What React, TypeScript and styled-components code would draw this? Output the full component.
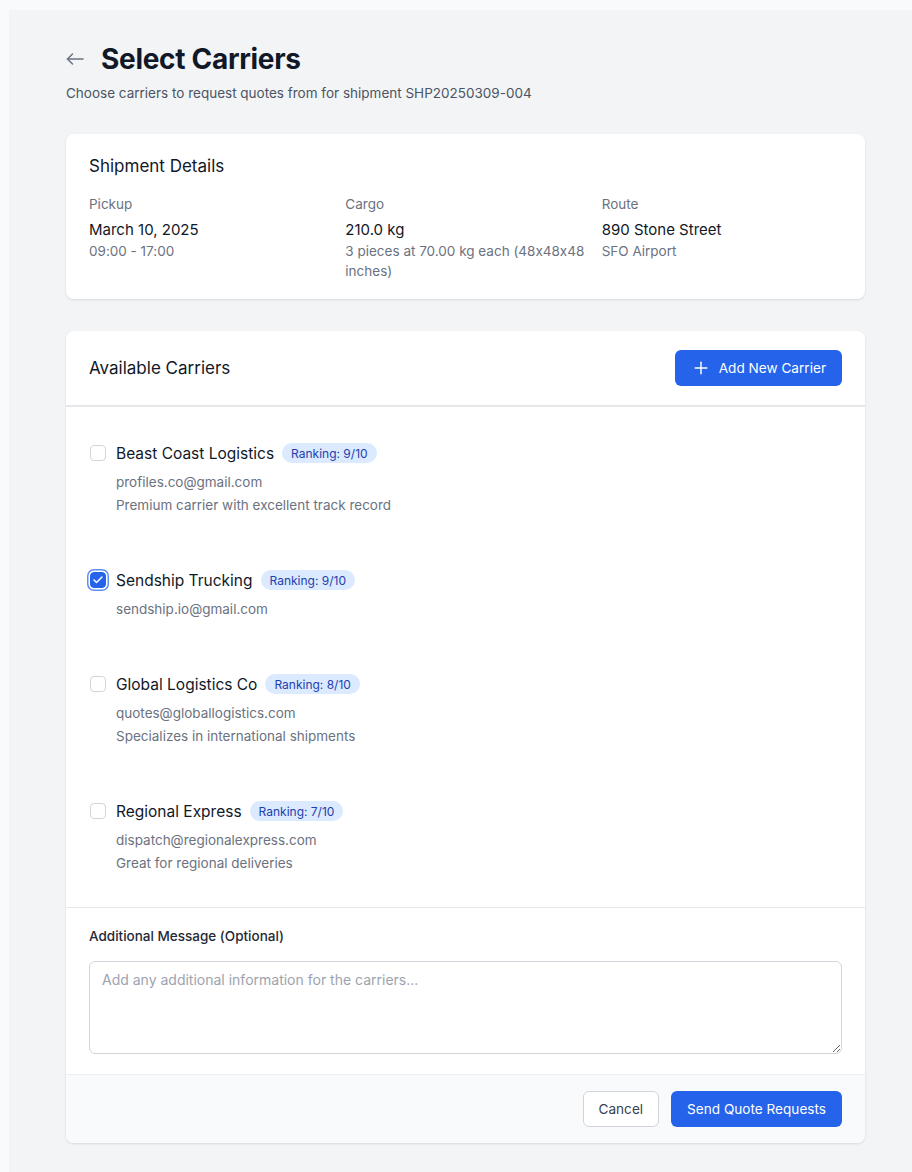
import React, { useState } from 'react';
import styled, { createGlobalStyle } from 'styled-components';
import { Plus, Check } from 'lucide-react';

const GlobalStyle = createGlobalStyle`
  body {
    margin: 0;
    background: #f9fafb;
    font-family: Inter, "Noto Sans", sans-serif;
    font-feature-settings: "calt" 0;
    color: #111827;
    -webkit-font-smoothing: antialiased;
  }
  * { box-sizing: border-box; }
`;

const Page = styled.div`
  margin: 10px 0 0 9px;
  min-height: 1162px;
  background: #f3f4f6;
  padding: 32px 47px 30px 57px;
`;

const Header = styled.div`
  margin-bottom: 31px;
`;

const TitleRow = styled.div`
  display: flex;
  align-items: center;
  gap: 17px;
`;

const BackButton = styled.button`
  border: none;
  background: none;
  padding: 0;
  display: flex;
  align-items: center;
  color: #6b7280;
  cursor: pointer;
`;

const Title = styled.h1`
  margin: 0;
  font-size: 28px;
  line-height: 34px;
  font-weight: 700;
  letter-spacing: -0.3px;
  color: #111827;
`;

const Subtitle = styled.p`
  margin: 7px 0 0;
  font-size: 13.5px;
  line-height: 20px;
  color: #4b5563;
`;

const Card = styled.section`
  background: #ffffff;
  border-radius: 8px;
  box-shadow: 0 1px 3px rgba(0, 0, 0, 0.08), 0 1px 2px rgba(0, 0, 0, 0.04);
  margin-bottom: 32px;
  overflow: hidden;
`;

const CardBody = styled.div`
  padding: 20px 23px 18px;
`;

const CardTitle = styled.h2`
  margin: 0;
  font-size: 17px;
  line-height: 24px;
  font-weight: 400;
  color: #111827;
`;

const DetailGrid = styled.div`
  display: grid;
  grid-template-columns: repeat(3, 1fr);
  gap: 16px;
  margin-top: 16px;
`;

const DetailLabel = styled.div`
  font-size: 13.5px;
  line-height: 20px;
  color: #6b7280;
`;

const DetailValue = styled.div`
  margin-top: 5px;
  font-size: 15px;
  line-height: 22px;
  color: #111827;
`;

const DetailSub = styled.div`
  font-size: 13.5px;
  line-height: 20px;
  color: #6b7280;
`;

const CardHeader = styled.div`
  display: flex;
  align-items: center;
  justify-content: space-between;
  padding: 19px 23px 19px;
  border-bottom: 2px solid #e5e7eb;
`;

const PrimaryButton = styled.button`
  display: inline-flex;
  align-items: center;
  gap: 8px;
  height: 36px;
  padding: 0 16px;
  border: none;
  border-radius: 6px;
  background: #2563eb;
  color: #ffffff;
  font-family: inherit;
  font-size: 13.6px;
  font-weight: 400;
  cursor: pointer;
`;

const SecondaryButton = styled.button`
  height: 36px;
  padding: 0 15px;
  border: 1px solid #d1d5db;
  border-radius: 6px;
  background: #ffffff;
  color: #374151;
  font-family: inherit;
  font-size: 13.6px;
  font-weight: 400;
  cursor: pointer;
`;

const CarrierList = styled.div`
  display: flex;
  flex-direction: column;
  gap: 53px;
  padding: 34px 24px 34px;
  border-bottom: 1px solid #e5e7eb;
`;

const CarrierItem = styled.label`
  display: flex;
  align-items: flex-start;
  gap: 10px;
  cursor: pointer;
`;

const Box = styled.span<{ $checked: boolean }>`
  flex: none;
  width: 16px;
  height: 16px;
  margin-top: 4px;
  border-radius: 4px;
  display: flex;
  align-items: center;
  justify-content: center;
  border: 1px solid ${(p) => (p.$checked ? '#2563eb' : '#d1d5db')};
  background: ${(p) => (p.$checked ? '#2563eb' : '#ffffff')};
  box-shadow: ${(p) => (p.$checked ? '0 0 0 1.5px #ffffff, 0 0 0 3px #5b8ff5' : 'none')};
  color: #ffffff;
`;

const CarrierInfo = styled.div`
  display: flex;
  flex-direction: column;
`;

const NameRow = styled.div`
  display: flex;
  align-items: center;
  gap: 8px;
  height: 24px;
`;

const CarrierName = styled.span`
  font-size: 15.5px;
  font-weight: 400;
  color: #111827;
`;

const Badge = styled.span`
  display: inline-flex;
  align-items: center;
  height: 20px;
  padding: 0 9px;
  border-radius: 999px;
  background: #dbeafe;
  color: #1e40af;
  font-size: 12px;
  font-weight: 400;
`;

const CarrierMeta = styled.div<{ $first?: boolean }>`
  margin-top: ${(p) => (p.$first ? '7px' : '3px')};
  font-size: 13.5px;
  line-height: 20px;
  color: #6b7280;
`;

const MessageSection = styled.div`
  padding: 18px 23px 20px;
`;

const FieldLabel = styled.label`
  display: block;
  font-size: 13.5px;
  line-height: 20px;
  font-weight: 500;
  color: #1f2937;
  margin-bottom: 15px;
`;

const TextArea = styled.textarea`
  display: block;
  width: 100%;
  height: 93px;
  padding: 8px 12px;
  border: 1px solid #d1d5db;
  border-radius: 6px;
  font-family: inherit;
  font-size: 14px;
  line-height: 20px;
  color: #111827;
  resize: vertical;
  &::placeholder {
    color: #9ca3af;
  }
`;

const Footer = styled.div`
  display: flex;
  justify-content: flex-end;
  gap: 12px;
  padding: 16px 23px;
  background: #f9fafb;
  border-top: 1px solid #eceef1;
`;

const BackArrow = () => (
  <svg width="18" height="12" viewBox="0 0 18 12" fill="none" stroke="currentColor" strokeWidth="1.5" strokeLinecap="round" strokeLinejoin="round">
    <path d="M17 6H1.5" />
    <path d="M6.5 1L1.5 6l5 5" />
  </svg>
);

interface Carrier {
  id: number;
  name: string;
  ranking: string;
  email: string;
  note?: string;
}

const carriers: Carrier[] = [
  { id: 1, name: 'Beast Coast Logistics', ranking: '9/10', email: 'profiles.co@gmail.com', note: 'Premium carrier with excellent track record' },
  { id: 2, name: 'Sendship Trucking', ranking: '9/10', email: 'sendship.io@gmail.com' },
  { id: 3, name: 'Global Logistics Co', ranking: '8/10', email: 'quotes@globallogistics.com', note: 'Specializes in international shipments' },
  { id: 4, name: 'Regional Express', ranking: '7/10', email: 'dispatch@regionalexpress.com', note: 'Great for regional deliveries' },
];

const App: React.FC = () => {
  const [selected, setSelected] = useState<number[]>([2]);
  const [message, setMessage] = useState('');

  const toggle = (id: number) => {
    setSelected((prev) => (prev.includes(id) ? prev.filter((x) => x !== id) : [...prev, id]));
  };

  return (
    <>
      <GlobalStyle />
      <Page>
        <Header>
          <TitleRow>
            <BackButton aria-label="Back">
              <BackArrow />
            </BackButton>
            <Title>Select Carriers</Title>
          </TitleRow>
          <Subtitle>Choose carriers to request quotes from for shipment SHP20250309-004</Subtitle>
        </Header>

        <Card>
          <CardBody>
            <CardTitle>Shipment Details</CardTitle>
            <DetailGrid>
              <div>
                <DetailLabel>Pickup</DetailLabel>
                <DetailValue>March 10, 2025</DetailValue>
                <DetailSub>09:00 - 17:00</DetailSub>
              </div>
              <div>
                <DetailLabel>Cargo</DetailLabel>
                <DetailValue>210.0 kg</DetailValue>
                <DetailSub>3 pieces at 70.00 kg each (48x48x48 inches)</DetailSub>
              </div>
              <div>
                <DetailLabel>Route</DetailLabel>
                <DetailValue>890 Stone Street</DetailValue>
                <DetailSub>SFO Airport</DetailSub>
              </div>
            </DetailGrid>
          </CardBody>
        </Card>

        <Card>
          <CardHeader>
            <CardTitle>Available Carriers</CardTitle>
            <PrimaryButton>
              <Plus size={20} strokeWidth={1.75} />
              Add New Carrier
            </PrimaryButton>
          </CardHeader>
          <CarrierList>
            {carriers.map((c) => {
              const checked = selected.includes(c.id);
              return (
                <CarrierItem key={c.id} onClick={() => toggle(c.id)}>
                  <Box $checked={checked}>{checked && <Check size={12} strokeWidth={3} />}</Box>
                  <CarrierInfo>
                    <NameRow>
                      <CarrierName>{c.name}</CarrierName>
                      <Badge>Ranking: {c.ranking}</Badge>
                    </NameRow>
                    <CarrierMeta $first>{c.email}</CarrierMeta>
                    {c.note && <CarrierMeta>{c.note}</CarrierMeta>}
                  </CarrierInfo>
                </CarrierItem>
              );
            })}
          </CarrierList>
          <MessageSection>
            <FieldLabel htmlFor="msg">Additional Message (Optional)</FieldLabel>
            <TextArea
              id="msg"
              placeholder="Add any additional information for the carriers..."
              value={message}
              onChange={(e) => setMessage(e.target.value)}
            />
          </MessageSection>
          <Footer>
            <SecondaryButton>Cancel</SecondaryButton>
            <PrimaryButton>Send Quote Requests</PrimaryButton>
          </Footer>
        </Card>
      </Page>
    </>
  );
};

export default App;
